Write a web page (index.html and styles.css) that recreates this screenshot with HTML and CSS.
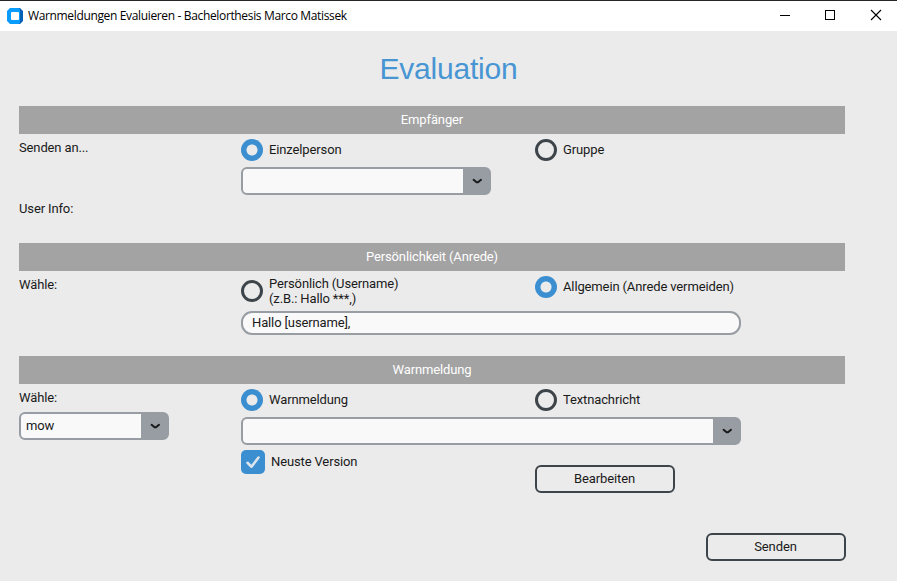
FILE: index.html
```html
<!DOCTYPE html>
<html lang="de">
<head>
<meta charset="utf-8">
<title>Warnmeldungen Evaluieren - Bachelorthesis Marco Matissek</title>
<link rel="stylesheet" href="styles.css">
</head>
<body>
<header class="titlebar">
  <svg class="app-icon" width="16" height="16" viewBox="0 0 16 16"><path d="M3 0h10l3 3v10l-3 3H9V0z" fill="#0560b5"/><path d="M3 0h9l1 1.500v13L12 16H3l-3-3V3z" fill="#0a9bff"/><rect x="4" y="4" width="8" height="8" rx="1" fill="#fff"/></svg>
  <span class="window-title">Warnmeldungen Evaluieren - Bachelorthesis Marco Matissek</span>
  <div class="window-controls">
    <svg width="46" height="30" viewBox="0 0 46 30"><path d="M19 14.500h10" stroke="#000"/></svg>
    <svg width="46" height="30" viewBox="0 0 46 30"><rect x="18.500" y="9.500" width="9" height="9" fill="none" stroke="#000"/></svg>
    <svg width="46" height="30" viewBox="0 0 46 30"><path d="M18 9l10 10M28 9l-10 10" fill="none" stroke="#000" stroke-width="1.100"/></svg>
  </div>
</header>
<h1 class="heading">Evaluation</h1>
<main class="content">
  <section class="section recipient">
    <h2 class="section-title">Empfänger</h2>
    <div class="labels">
      <span>Senden an...</span>
      <span class="user-info">User Info:</span>
    </div>
    <label class="radio checked"><i class="dot"></i><span>Einzelperson</span></label>
    <label class="radio"><i class="dot"></i><span>Gruppe</span></label>
    <div class="combo combo-medium wide"><span class="value"></span><svg width="26" height="24" viewBox="0 0 26 24"><path d="M10.600 10.800l3 2.500h1.400l3-2.500" fill="none" stroke="#1a1a1a" stroke-width="2" stroke-linecap="round"/></svg></div>
  </section>

  <section class="section salutation">
    <h2 class="section-title">Persönlichkeit (Anrede)</h2>
    <div class="labels"><span>Wähle:</span></div>
    <label class="radio two-line"><i class="dot"></i><span>Persönlich (Username)<br>(z.B.: Hallo ***,)</span></label>
    <label class="radio checked"><i class="dot"></i><span>Allgemein (Anrede vermeiden)</span></label>
    <div class="entry wide">Hallo [username],</div>
  </section>

  <section class="section message">
    <h2 class="section-title">Warnmeldung</h2>
    <div class="labels">
      <span>Wähle:</span>
      <div class="combo combo-small"><span class="value">mow</span><svg width="26" height="24" viewBox="0 0 26 24"><path d="M10.600 10.800l3 2.500h1.400l3-2.500" fill="none" stroke="#1a1a1a" stroke-width="2" stroke-linecap="round"/></svg></div>
    </div>
    <label class="radio checked"><i class="dot"></i><span>Warnmeldung</span></label>
    <label class="radio"><i class="dot"></i><span>Textnachricht</span></label>
    <div class="combo combo-large wide"><span class="value"></span><svg width="26" height="24" viewBox="0 0 26 24"><path d="M10.600 10.800l3 2.500h1.400l3-2.500" fill="none" stroke="#1a1a1a" stroke-width="2" stroke-linecap="round"/></svg></div>
    <label class="checkbox"><svg width="24" height="24" viewBox="0 0 24 24"><rect width="24" height="24" rx="5" fill="#3b8ed0"/><path d="M6.500 12.800l4 3.900 7-9.200" fill="none" stroke="#dce4ee" stroke-width="2.600" stroke-linecap="round" stroke-linejoin="round"/></svg><span>Neuste Version</span></label>
    <button class="button edit">Bearbeiten</button>
  </section>

  <footer class="actions"><button class="button">Senden</button></footer>
</main>
</body>
</html>
```

FILE: styles.css
```css
* { box-sizing: border-box; }

body {
  margin: 0;
  height: 581px;
  overflow: hidden;
  background: #ebebeb;
  color: #1a1a1a;
  font: 13px/15px Roboto, "Liberation Sans", sans-serif;
  letter-spacing: -0.13px;
}

.titlebar {
  display: flex;
  align-items: center;
  height: 31px;
  padding-left: 7px;
  border-top: 1px solid #252527;
  background: #fff;
}

.app-icon { margin-right: 5px; }

.window-title {
  color: #000;
  font: 12px/16px "Open Sans", "Noto Sans", sans-serif;
  letter-spacing: -0.35px;
  white-space: nowrap;
}

.window-controls { display: flex; margin-left: auto; margin-right: -2px; }

.content { width: 846px; padding-left: 19px; }

.heading {
  height: 75px;
  margin: 0;
  color: #4796d3;
  font: 30px/75px "Liberation Sans", sans-serif;
  letter-spacing: -0.2px;
  text-align: center;
}

.section {
  display: grid;
  grid-template-columns: 222px 294px 310px;
  align-items: start;
  width: 826px;
}

.recipient { height: 137px; grid-template-rows: 28px 33px 76px; }
.salutation { height: 113px; grid-template-rows: 28px 40px 45px; }
.message { height: 177px; grid-template-rows: 28px 33px 33px 83px; }

.section-title {
  grid-column: 1 / -1;
  height: 28px;
  margin: 0;
  background: #a3a3a3;
  color: #fff;
  font-size: 13px;
  font-weight: 400;
  line-height: 27px;
  text-align: center;
}

.labels {
  display: flex;
  flex-direction: column;
  grid-row: 2 / 4;
  padding-top: 6px;
}

.user-info { margin-top: 46px; }

.radio, .checkbox {
  display: flex;
  align-items: center;
  gap: 6px;
}

.radio { padding-top: 5px; }

.radio span, .checkbox span { padding-bottom: 2px; }

.two-line span { padding-bottom: 0; }

.dot {
  width: 22px;
  height: 22px;
  border: 3px solid #3e454a;
  border-radius: 50%;
}

.checked .dot {
  border: 0;
  background: radial-gradient(circle, #ebebeb 5px, #3b8ed0 6px);
}

.wide { grid-column: 2 / 4; }

.combo {
  display: flex;
  height: 28px;
  border: 2px solid #979da2;
  border-radius: 6px;
  background: #979da2;
}

.combo-small { width: 150px; margin-top: 7px; }
.combo-medium { width: 250px; }
.combo-large { width: 500px; }

.value {
  flex: 1;
  padding-left: 5px;
  border-radius: 4px 0 0 4px;
  background: #f9f9fa;
  line-height: 23px;
}

.entry {
  width: 500px;
  height: 24px;
  padding-left: 9px;
  border: 2px solid #979da2;
  border-radius: 11px;
  background: #f9f9fa;
  line-height: 20px;
}

.checkbox { grid-column: 2; }

.button {
  width: 140px;
  height: 28px;
  padding: 0 1px 1px 0;
  border: 2px solid #3e454a;
  border-radius: 6px;
  background: transparent;
  color: #1a1a1a;
  font: inherit;
  letter-spacing: -0.1px;
}

.edit { margin-top: 15px; }

.actions { display: flex; justify-content: flex-end; }
```
